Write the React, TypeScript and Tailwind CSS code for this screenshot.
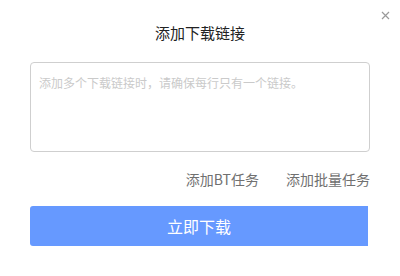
import React from 'react';

const font = { fontFamily: '"Microsoft YaHei", "Noto Sans CJK SC", sans-serif' };

export default function App() {
  return (
    <div className="relative w-[400px] h-[276px] bg-white px-[30px]" style={font}>
      {/* Close */}
      <button className="absolute top-[10px] right-[10px] w-[10px] h-[10px] flex items-center justify-center">
        <svg width="9" height="9" viewBox="0 0 9 9" fill="none" stroke="#9a9a9a" strokeWidth="1.2">
          <path d="M1 1L8 8M8 1L1 8" />
        </svg>
      </button>

      {/* Title */}
      <div className="pt-[23px] text-center text-[15px] leading-[20px] text-[#222]">添加下载链接</div>

      {/* Links input */}
      <textarea
        className="mt-[19px] block w-[340px] h-[90px] resize-none rounded-[4px] border border-[#cfcfcf] px-[8px] pt-[12px] pb-[10px] text-[12px] leading-[16px] text-[#333] outline-none placeholder:text-[#cacaca]"
        placeholder="添加多个下载链接时，请确保每行只有一个链接。"
      />

      {/* Extra actions */}
      <div className="mt-[17px] flex justify-end gap-[27px] text-[14px] leading-[20px] text-[#707070]">
        <span>添加BT任务</span>
        <span>添加批量任务</span>
      </div>

      {/* Submit */}
      <button className="mt-[17px] flex h-[40px] w-[338px] items-center justify-center rounded-l-[3px] bg-[#6699ff] text-[16px] text-white">
        立即下载
      </button>
    </div>
  );
}
